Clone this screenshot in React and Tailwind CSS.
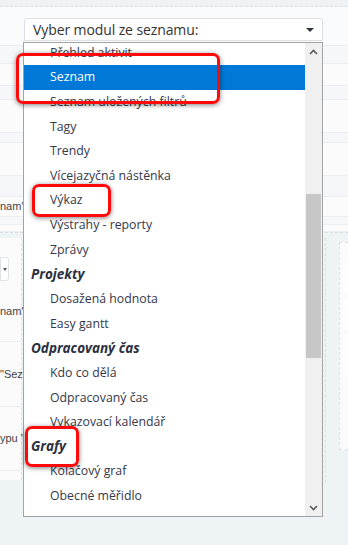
const items = [
  { label: "Přehled aktivit" },
  { label: "Seznam", selected: true },
  { label: "Seznam uložených filtrů" },
  { label: "Tagy" },
  { label: "Trendy" },
  { label: "Vícejazyčná nástěnka" },
  { label: "Výkaz" },
  { label: "Výstrahy - reporty" },
  { label: "Zprávy" },
  { group: "Projekty" },
  { label: "Dosažená hodnota" },
  { label: "Easy gantt" },
  { group: "Odpracovaný čas" },
  { label: "Kdo co dělá" },
  { label: "Odpracovaný čas" },
  { label: "Vykazovací kalendář" },
  { group: "Grafy" },
  { label: "Koláčový graf" },
  { label: "Obecné měřidlo" },
];

// rows of the page table behind the select
const pageRows = [
  { h: "h-[5px]" },
  { h: "h-[18px]", alt: true },
  { h: "h-[22px]" },
  { h: "h-[14px]", alt: true },
  { h: "h-[33px]" },
  { h: "h-[10px]", alt: true },
  { h: "h-[33px]" },
  { h: "h-[21px]", alt: true },
  { h: "h-[20px]", text: "nam\"" },
  { h: "h-[8px]", alt: true },
  { h: "h-[7px]" },
];

const Chevron = ({ up }) => (
  <svg width="9" height="6" viewBox="0 0 9 6" className="block">
    <path
      d={up ? "M1 5 L4.5 1.5 L8 5" : "M1 1 L4.5 4.5 L8 1"}
      fill="none"
      stroke="#5a5a5a"
      strokeWidth="1.6"
    />
  </svg>
);

const Callout = ({ className }) => (
  <div
    className={`absolute rounded-[7px] border-[3.5px] border-[#ff0a0a] shadow-[0_1px_5px_rgba(0,0,0,0.5)] ${className}`}
  />
);

const sideText = "text-[11px] text-[#444] leading-none font-['Liberation_Sans',sans-serif] whitespace-nowrap";

export default function App() {
  return (
    <div className="relative w-[348px] h-[545px] overflow-hidden bg-[#eef3f6] font-['Open_Sans',sans-serif]">
      {/* page behind */}
      <div className="h-[7px] bg-[#eef2f5] border-b border-dashed border-[#dde2e7]" />
      <div className="bg-[#fafbfc] pt-[11px]">
        <div className="ml-[24px] w-[299px] h-[23px] bg-white border border-[#dcdfe4] rounded-t-[3px] flex items-center pl-[8px] pr-[8px]">
          <span className="flex-1 text-[14px] text-[#333] leading-none tracking-[-0.1px]">
            Vyber modul ze seznamu:
          </span>
          <span className="w-0 h-0 border-l-[4px] border-r-[4px] border-t-[4px] border-l-transparent border-r-transparent border-t-[#2e3440]" />
        </div>
        <div className="flex flex-col">
          {pageRows.map((r, i) => (
            <div
              key={i}
              className={`${r.h} border-b border-[#eceff2] ${r.alt ? "bg-[#f6f7f9]" : "bg-[#fbfbfc]"} flex items-center`}
            >
              {r.text && <span className={sideText}>{r.text}</span>}
            </div>
          ))}
        </div>
      </div>
      <div className="border-t border-dashed border-[#d9dee3] flex pt-[5px]">
        <div className="w-[22px] h-[242px] bg-[#fbfbfc] border-r border-dashed border-[#dde2e6] flex flex-col">
          <div className="mt-[19px] w-[9px] h-[24px] bg-white border border-[#dfe2e6] rounded-r-[3px] flex items-center justify-end pr-[1px]">
            <span className="w-0 h-0 border-l-[2px] border-r-[2px] border-t-[3px] border-l-transparent border-r-transparent border-t-[#555]" />
          </div>
          <div className={`h-[61px] border-b border-[#eceff2] flex items-center ${sideText}`}>nam",</div>
          <div className={`h-[65px] border-b border-[#eceff2] flex items-center ${sideText}`}>"Sezn</div>
          <div className={`h-[64px] border-b border-[#eceff2] flex items-center ${sideText}`}>ypu "S</div>
        </div>
        <div className="flex-1" />
        <div className="w-[23px] h-[245px] border-l border-dashed border-[#d9dee3] flex justify-end pt-[4px]">
          <div className="w-[9px] h-[208px] bg-[#fbfbfc] border-l border-t border-b border-dashed border-[#dde2e6] flex flex-col gap-[6px] pt-[20px] pl-[3px]">
            <div className="h-[30px] bg-white" />
            <div className="h-[30px] bg-white" />
            <div className="h-[40px] bg-white" />
          </div>
        </div>
      </div>

      {/* open dropdown */}
      <div className="absolute left-[23px] top-[42px] w-[300px] h-[475px] bg-white border border-[#a3a3a3] flex">
        <div className="flex-1 overflow-hidden">
          <div className="mt-[-2.6px] flex flex-col">
            {items.map((it, i) =>
              it.group ? (
                <div
                  key={i}
                  className="h-[24.65px] flex items-center pl-[7px] text-[13.5px] font-bold italic text-[#2b2f40] leading-none whitespace-nowrap"
                >
                  {it.group}
                </div>
              ) : (
                <div
                  key={i}
                  className={`h-[24.65px] flex items-center pl-[26px] text-[12.3px] leading-none whitespace-nowrap ${
                    it.selected ? "bg-[#0078d7] text-white" : "text-[#34384a]"
                  }`}
                >
                  {it.label}
                </div>
              )
            )}
          </div>
        </div>
        <div className="w-[17px] bg-[#f0f0f0] flex flex-col px-[1px]">
          <div className="h-[17px] flex items-center justify-center">
            <Chevron up />
          </div>
          <div className="flex-1 pt-[134px]">
            <div className="h-[164px] bg-[#c7c7c7]" />
          </div>
          <div className="h-[17px] flex items-center justify-center">
            <Chevron />
          </div>
        </div>
      </div>

      {/* annotation boxes */}
      <Callout className="left-[16px] top-[53px] w-[204px] h-[51px]" />
      <Callout className="left-[32px] top-[184px] w-[79px] h-[33px]" />
      <Callout className="left-[25px] top-[426px] w-[54px] h-[41px]" />
    </div>
  );
}
